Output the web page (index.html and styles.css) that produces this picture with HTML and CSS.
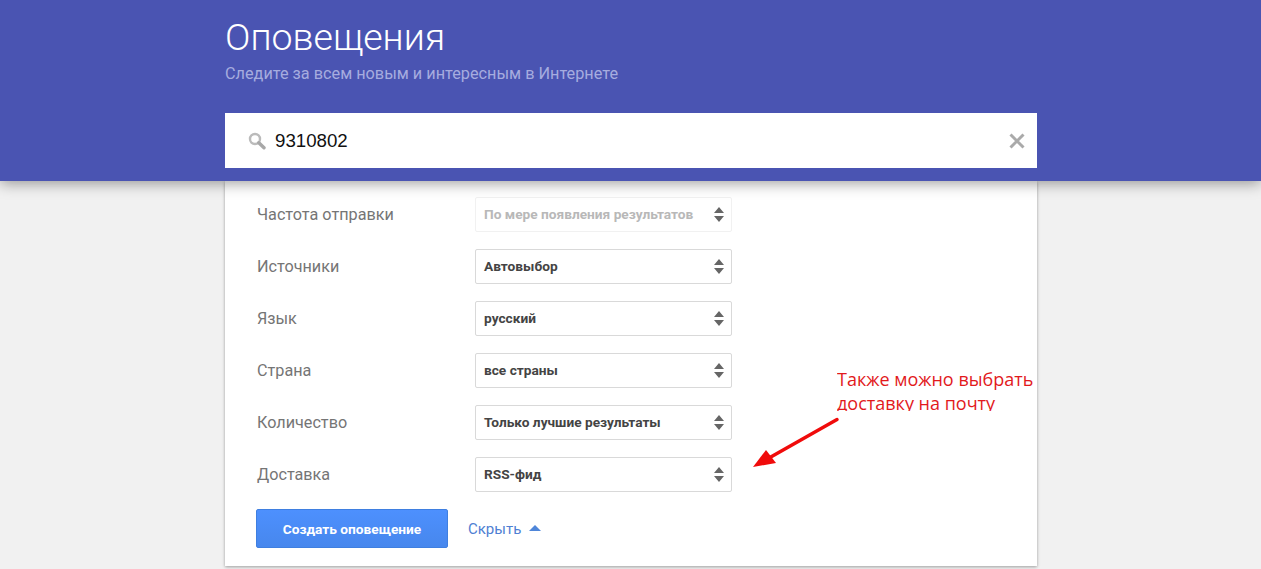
FILE: index.html
```html
<!DOCTYPE html>
<html lang="ru">
<head>
<meta charset="utf-8">
<title>Оповещения</title>
<link rel="stylesheet" href="styles.css">
</head>
<body>
<header class="header">
  <div class="wrap">
    <h1 class="title">Оповещения</h1>
    <p class="subtitle">Следите за всем новым и интересным в Интернете</p>
    <div class="search">
      <svg class="search-icon" width="18" height="18" viewBox="0 0 18 18"><circle cx="7" cy="7" r="5" fill="none" stroke="#bbb" stroke-width="2.400"/><path d="M10.800 10.800L16 15.800" stroke="#a8a8a8" stroke-width="3.400" stroke-linecap="round"/></svg>
      <span class="query">9310802</span>
      <svg class="clear" width="16" height="16" viewBox="0 0 16 16"><path d="M1.500 1.500L14.500 14.500M14.500 1.500L1.500 14.500" stroke="#aaa" stroke-width="3"/></svg>
    </div>
  </div>
</header>
<main class="card">
  <div class="row">
    <span class="label">Частота отправки</span>
    <div class="select disabled"><span>По мере появления результатов</span><svg class="updown" width="10" height="15" viewBox="0 0 10 15"><path d="M5 0L10 6H0Z M0 9H10L5 15Z" fill="#666"/></svg></div>
  </div>
  <div class="row">
    <span class="label">Источники</span>
    <div class="select"><span>Автовыбор</span><svg class="updown" width="10" height="15" viewBox="0 0 10 15"><path d="M5 0L10 6H0Z M0 9H10L5 15Z" fill="#666"/></svg></div>
  </div>
  <div class="row">
    <span class="label">Язык</span>
    <div class="select"><span>русский</span><svg class="updown" width="10" height="15" viewBox="0 0 10 15"><path d="M5 0L10 6H0Z M0 9H10L5 15Z" fill="#666"/></svg></div>
  </div>
  <div class="row">
    <span class="label">Страна</span>
    <div class="select"><span>все страны</span><svg class="updown" width="10" height="15" viewBox="0 0 10 15"><path d="M5 0L10 6H0Z M0 9H10L5 15Z" fill="#666"/></svg></div>
  </div>
  <div class="row">
    <span class="label">Количество</span>
    <div class="select"><span>Только лучшие результаты</span><svg class="updown" width="10" height="15" viewBox="0 0 10 15"><path d="M5 0L10 6H0Z M0 9H10L5 15Z" fill="#666"/></svg></div>
  </div>
  <div class="row">
    <span class="label">Доставка</span>
    <div class="select"><span>RSS-фид</span><svg class="updown" width="10" height="15" viewBox="0 0 10 15"><path d="M5 0L10 6H0Z M0 9H10L5 15Z" fill="#666"/></svg></div>
  </div>
  <div class="actions">
    <button class="create" type="button">Создать оповещение</button>
    <a class="hide" href="#">Скрыть<svg class="caret" width="12" height="6" viewBox="0 0 12 6"><path d="M6 0L12 6H0Z" fill="#4f86d9"/></svg></a>
  </div>
  <div class="note">Также можно выбрать<br>доставку на почту</div>
  <svg class="arrow" width="90" height="54" viewBox="0 0 90 54"><path d="M85 2.500L17 41" stroke="#f00b0b" stroke-width="3.500" stroke-linecap="round"/><path d="M1 50L14 33L24 46Z" fill="#f00b0b"/></svg>
</main>
</body>
</html>
```
FILE: styles.css
```css
* { box-sizing: border-box; }
html, body { height: 100%; }
body {
  margin: 0;
  height: 569px;
  overflow: hidden;
  background: #f1f1f1;
  font-family: Roboto, "Liberation Sans", sans-serif;
}
.header {
  position: relative;
  z-index: 2;
  height: 181px;
  background: #4a54b2;
  box-shadow: 0 2px 14px rgba(0, 0, 0, .4);
}
.wrap {
  width: 812px;
  margin-left: 225px;
  padding-top: 15px;
}
.title {
  margin: 0;
  font-size: 37.500px;
  line-height: 44px;
  font-weight: 300;
  color: #fff;
}
.subtitle {
  margin: 5px 0 0;
  font-size: 16.250px;
  line-height: 20px;
  color: #a6acdf;
}
.search {
  display: flex;
  align-items: center;
  height: 55px;
  margin-top: 29px;
  padding: 0 12px 0 23px;
  background: #fff;
}
.search-icon { flex: none; margin-right: 9px; }
.query {
  flex: 1;
  padding-top: 1px;
  font-family: "Liberation Sans", Arial, sans-serif;
  font-size: 18.700px;
  color: #111;
}
.clear { flex: none; }
.card {
  position: relative;
  width: 812px;
  height: 385px;
  margin-left: 225px;
  padding: 16px 32px 0;
  background: #fff;
  box-shadow: 0 1px 3px rgba(0, 0, 0, .35);
}
.row {
  display: flex;
  align-items: center;
  height: 35px;
  margin-bottom: 17px;
}
.label {
  width: 218px;
  font-size: 16.200px;
  color: #757575;
}
.select {
  display: flex;
  align-items: center;
  justify-content: space-between;
  width: 257px;
  height: 35px;
  padding: 0 7px 2px 8px;
  border: 1px solid #d9d9d9;
  border-radius: 2px;
  font-size: 13.700px;
  font-weight: 700;
  color: #444;
}
.select.disabled {
  border-color: #f1f1f1;
  color: #b8b8b8;
}
.updown { flex: none; margin-top: 2px; }
.actions {
  display: flex;
  align-items: center;
  margin-top: 1px;
  margin-left: -1px;
}
.create {
  width: 192px;
  height: 39px;
  padding: 0;
  border: 1px solid #3f7fe0;
  border-radius: 2px;
  background: linear-gradient(#4d90fe, #4787ed);
  color: #fff;
  font: 700 13.700px Roboto, "Liberation Sans", sans-serif;
}
.hide {
  display: flex;
  align-items: center;
  margin-left: 20px;
  font-size: 15px;
  color: #4f7fd3;
  text-decoration: none;
}
.caret { margin-left: 8px; margin-top: -2px; }
.note {
  position: absolute;
  left: 612px;
  top: 186px;
  height: 44px;
  overflow: hidden;
  font-family: "Open Sans", sans-serif;
  font-size: 18px;
  line-height: 24px;
  color: #e2191c;
  white-space: nowrap;
}
.arrow {
  position: absolute;
  left: 527px;
  top: 236px;
}
```
